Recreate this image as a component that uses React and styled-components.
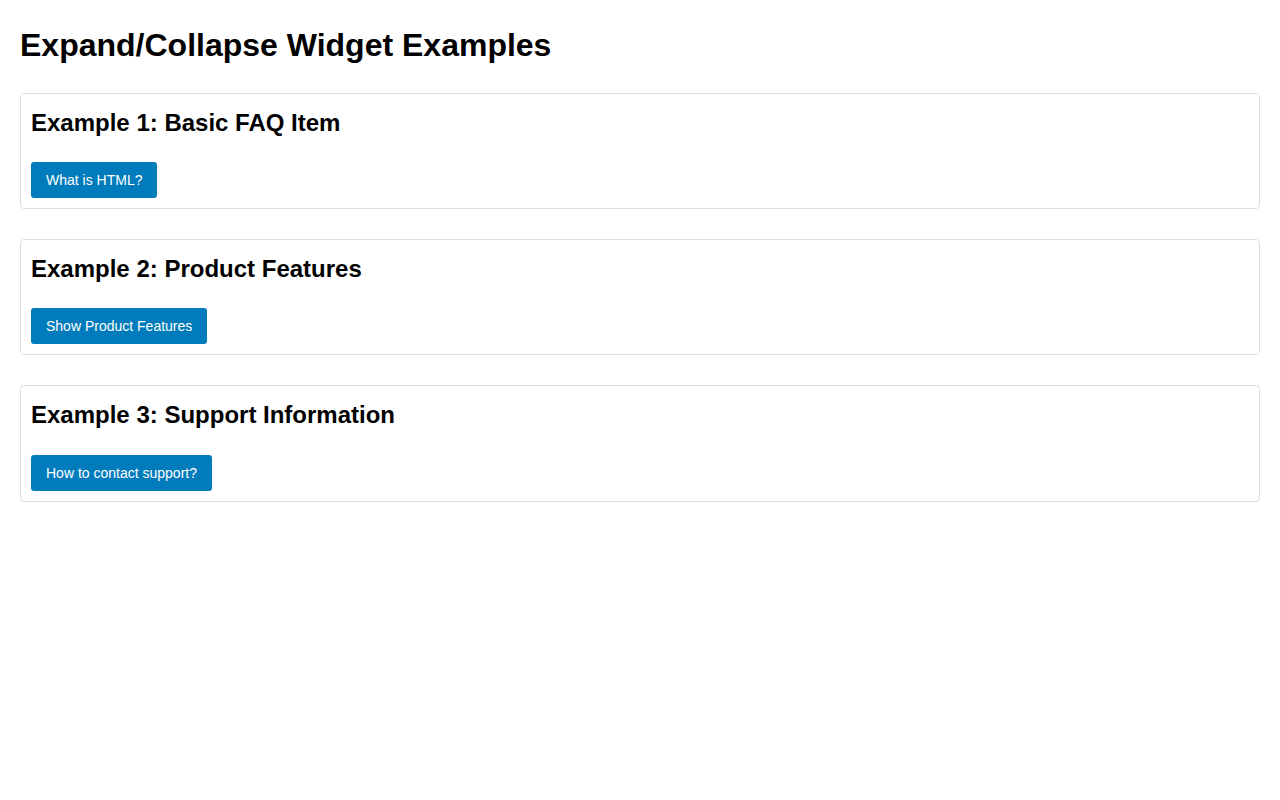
import React from 'react'
import styled, { createGlobalStyle } from 'styled-components'

const GlobalStyle = createGlobalStyle`
  body {
    margin: 0;
    padding: 20px;
    font-family: "Liberation Sans", Arial, sans-serif;
    line-height: 1.6;
    color: #000;
    background: #fff;
  }
`

const Title = styled.h1`
  font-size: 32px;
  font-weight: bold;
  margin: 0 0 21.44px;
`

const Card = styled.section`
  border: 1px solid #ddd;
  border-radius: 4px;
  padding: 10px;
  margin-bottom: 30px;
`

const CardTitle = styled.h2`
  font-size: 24px;
  font-weight: bold;
  margin: 0 0 20px;
`

const Toggle = styled.button`
  display: block;
  font-family: "Liberation Sans", Arial, sans-serif;
  font-size: 14px;
  line-height: normal;
  color: #fff;
  background: #007bbb;
  border: none;
  border-radius: 3px;
  padding: 10px 15px;
  cursor: pointer;
`

const examples = [
  { title: 'Example 1: Basic FAQ Item', label: 'What is HTML?' },
  { title: 'Example 2: Product Features', label: 'Show Product Features' },
  { title: 'Example 3: Support Information', label: 'How to contact support?' },
]

export default function App() {
  return (
    <>
      <GlobalStyle />
      <Title>Expand/Collapse Widget Examples</Title>
      {examples.map((ex) => (
        <Card key={ex.title}>
          <CardTitle>{ex.title}</CardTitle>
          <Toggle aria-expanded="false">{ex.label}</Toggle>
        </Card>
      ))}
    </>
  )
}
